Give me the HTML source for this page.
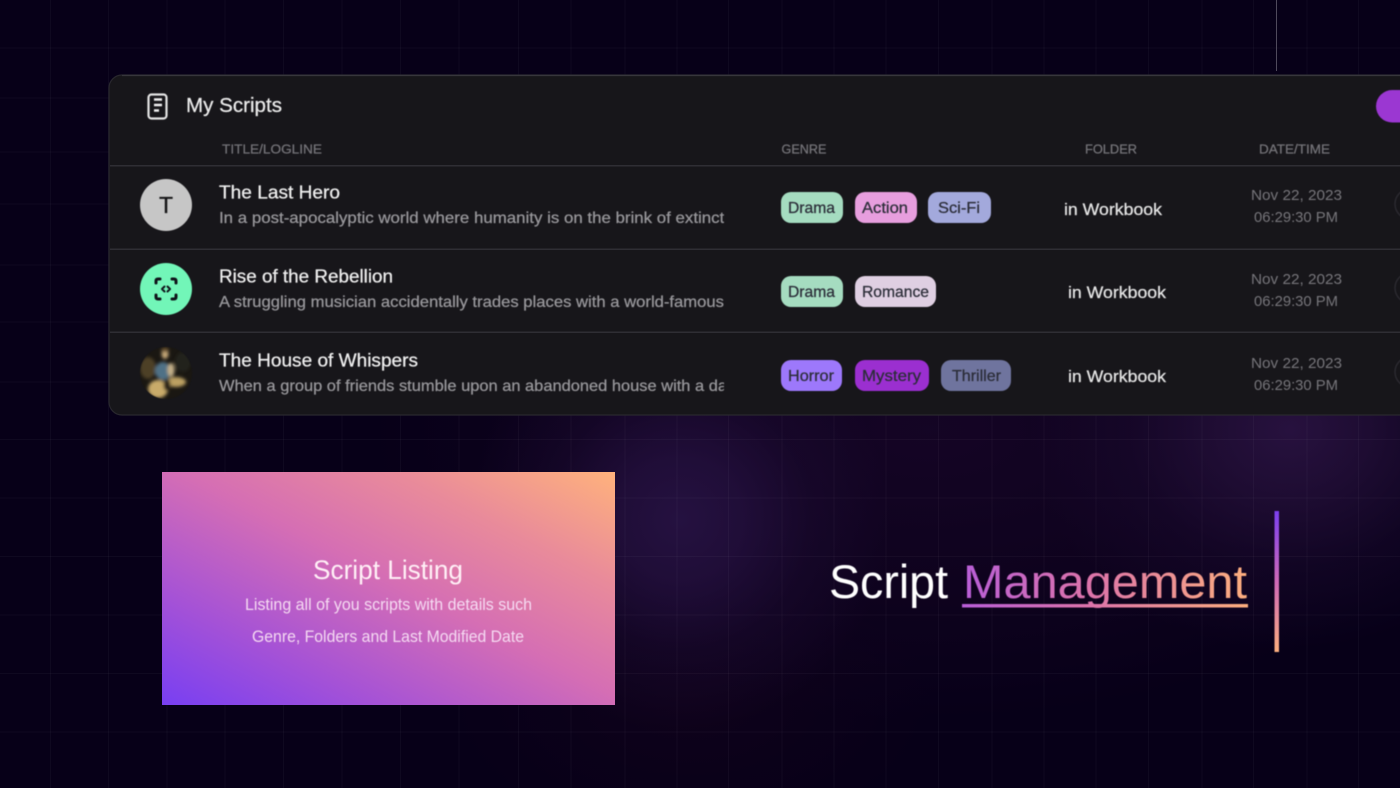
<!DOCTYPE html>
<html lang="en">
<head>
<meta charset="utf-8">
<title>Script Management</title>
<style>
html,body{margin:0;padding:0;width:1400px;height:788px;overflow:hidden;background:#070018}
.layer{position:absolute;left:0;top:0;width:1400px;height:788px}
.glow{background:
 radial-gradient(ellipse 210px 210px at 680px 520px,rgba(38,18,66,.95) 0%,rgba(36,16,62,.8) 30%,rgba(30,12,52,.42) 62%,rgba(7,0,24,0) 100%),
 radial-gradient(ellipse 260px 220px at 1290px 430px,rgba(42,19,66,.9) 0%,rgba(38,17,60,.7) 30%,rgba(30,12,52,.36) 62%,rgba(7,0,24,0) 100%),
 radial-gradient(ellipse 560px 290px at 930px 430px,rgba(24,6,40,.8) 0%,rgba(20,4,34,.5) 60%,rgba(7,0,24,0) 100%),
 radial-gradient(ellipse 240px 140px at 690px 700px,rgba(20,3,28,.6) 0%,rgba(7,0,24,0) 100%),
 #070018}
.box{position:absolute;left:162px;top:472px;width:453px;height:233px;
 background:linear-gradient(to top right,#783ff2 0%,#a552d6 24%,#d56eb4 52%,#e98b9a 76%,#ffb27c 100%)}
svg{display:block}
text{font-family:"Liberation Sans",sans-serif}
.b{filter:blur(.45px)}
.w{stroke-width:.25px}
</style>
</head>
<body>
<div class="layer glow"></div>
<svg class="layer" width="1400" height="788" viewBox="0 0 1400 788" style="position:absolute">
 <g stroke="#ffffff" stroke-opacity=".036" stroke-width="1" fill="none">
  <path d="M50.5 0V788M108.5 0V788M167 0V788M225 0V788M283.5 0V788M342 0V788M400.5 0V788M459 0V788M518.5 0V788M571 0V788M625 0V788M677 0V788M728.5 0V788M782 0V788M834 0V788M886 0V788M938.5 0V788M992 0V788M1044 0V788M1096 0V788M1148.5 0V788M1202 0V788M1253.5 0V788M1307 0V788M1358.5 0V788"/>
  <path d="M0 48H1400M0 98H110M0 152H110M0 204H110M0 265H110M0 322H110M0 382H110M0 439.5H1400M0 498H1400M0 556.5H1400M0 615H1400M0 673.5H1400M0 732H1400"/>
 </g>
</svg>
<div class="box"></div>
<svg class="layer" width="1400" height="788" viewBox="0 0 1400 788" style="position:absolute">
 <defs>
  <clipPath id="sub"><rect x="215" y="205" width="509" height="195"/></clipPath>
  <clipPath id="ava"><circle cx="166" cy="373" r="26"/></clipPath>
  <linearGradient id="mg" gradientUnits="userSpaceOnUse" x1="962" y1="0" x2="1248" y2="0">
   <stop offset="0" stop-color="#b85ed8"/><stop offset=".45" stop-color="#dd74aa"/><stop offset="1" stop-color="#fdaf7e"/>
  </linearGradient>
  <linearGradient id="vb" x1="0" y1="0" x2="0" y2="1">
   <stop offset="0" stop-color="#7c40f0"/><stop offset=".5" stop-color="#cf69b8"/><stop offset="1" stop-color="#fdaf7e"/>
  </linearGradient>
  <filter id="soft" filterUnits="userSpaceOnUse" x="130" y="335" width="72" height="76"><feGaussianBlur stdDeviation="1.500"/></filter>
 </defs>

 <!-- top connector -->
 <rect x="1276" y="0" width="1" height="71" fill="#4f4a5c"/>

 <!-- card -->
 <rect x="109" y="75" width="1320" height="340" rx="13" fill="#17161a" stroke="#29282e" stroke-width="1.2"/>
 <path d="M122 75.500H1400" stroke="#37363c" stroke-width="1.2"/>
 <g fill="#2f2e34">
  <rect x="110" y="165" width="1290" height="1.5"/>
  <rect x="110" y="248.5" width="1290" height="1.5"/>
  <rect x="110" y="331.5" width="1290" height="1.5"/>
 </g>

 <g class="b">
  <!-- header -->
  <rect x="148.500" y="94.500" width="18" height="24" rx="3" fill="none" stroke="#e4e4e4" stroke-width="2.200"/>
  <path d="M154 99.500H162M154 105H162M154 110.500H159" fill="none" stroke="#f0f0f0" stroke-width="2.400"/>
  <text class="w" stroke="#ececec" x="186" y="112" font-size="20.5" fill="#ececec" textLength="96" lengthAdjust="spacingAndGlyphs">My Scripts</text>
  <rect x="1376" y="90" width="60" height="32.5" rx="16.2" fill="#9b37d2"/>

  <!-- column heads -->
  <g class="w" stroke="#757479" font-size="12.5" fill="#757479">
   <text x="222" y="153.500" textLength="100" lengthAdjust="spacingAndGlyphs">TITLE/LOGLINE</text>
   <text x="781.500" y="153.500" textLength="45" lengthAdjust="spacingAndGlyphs">GENRE</text>
   <text x="1085" y="153.500" textLength="52" lengthAdjust="spacingAndGlyphs">FOLDER</text>
   <text x="1259" y="153.500" textLength="71" lengthAdjust="spacingAndGlyphs">DATE/TIME</text>
  </g>

  <!-- avatars -->
  <circle cx="166" cy="205" r="26" fill="#c6c6c6"/>
  <text class="w" stroke="#141416" x="166" y="213" font-size="23" fill="#141416" text-anchor="middle">T</text>
  <circle cx="166" cy="289" r="26" fill="#72f6b8"/>
  <path d="M156 283V281Q156 279 158 279H160M172 279H174Q176 279 176 281V283M176 295V297Q176 299 174 299H172M160 299H158Q156 299 156 297V295" fill="none" stroke="#10131a" stroke-width="3" stroke-linecap="round"/>
  <path d="M164.500 286.500L162 289L164.500 291.500M167.500 286.500L170 289L167.500 291.500" fill="none" stroke="#10131a" stroke-width="2" stroke-linecap="round" stroke-linejoin="round"/>
  <g clip-path="url(#ava)">
   <rect x="138" y="345" width="56" height="56" fill="#1a1712"/>
   <g filter="url(#soft)">
    <ellipse cx="148" cy="368" rx="8" ry="11" fill="#4e3f26"/>
    <ellipse cx="183" cy="362" rx="8" ry="10" fill="#22221a"/>
    <ellipse cx="165" cy="354" rx="3.500" ry="5" fill="#c6a878"/>
    <ellipse cx="165" cy="349.500" rx="4" ry="2.500" fill="#5a4526"/>
    <ellipse cx="163" cy="371" rx="8" ry="9" fill="#4f7186"/>
    <ellipse cx="171" cy="370" rx="3.500" ry="7" fill="#c4b088"/>
    <ellipse cx="158" cy="389" rx="10" ry="9" fill="#c9ab6a"/>
    <ellipse cx="176" cy="382" rx="10" ry="5" fill="#bca062"/>
    <ellipse cx="167" cy="385" rx="3.500" ry="6" fill="#231e14"/>
   </g>
  </g>

  <!-- titles -->
  <g class="w" stroke="#f0f0f0" font-size="18" fill="#f0f0f0">
   <text x="219" y="198.500" textLength="121" lengthAdjust="spacingAndGlyphs">The Last Hero</text>
   <text x="219" y="282.500" textLength="174" lengthAdjust="spacingAndGlyphs">Rise of the Rebellion</text>
   <text x="219" y="366.500" textLength="199" lengthAdjust="spacingAndGlyphs">The House of Whispers</text>
  </g>
  <g class="w" stroke="#99989c" font-size="16" fill="#99989c" clip-path="url(#sub)">
   <text x="219" y="223" textLength="509" lengthAdjust="spacingAndGlyphs">In a post-apocalyptic world where humanity is on the brink of extincti</text>
   <text x="219" y="307" textLength="505" lengthAdjust="spacingAndGlyphs">A struggling musician accidentally trades places with a world-famous</text>
   <text x="219" y="391" textLength="508" lengthAdjust="spacingAndGlyphs">When a group of friends stumble upon an abandoned house with a da</text>
  </g>

  <!-- pills -->
  <rect x="781" y="192" width="62" height="31" rx="10" fill="#a5dcc0"/>
  <rect x="855" y="192" width="62" height="31" rx="10" fill="#e79ede"/>
  <rect x="928" y="192" width="63" height="31" rx="10" fill="#a3a9dc"/>
  <rect x="781" y="276" width="62" height="31" rx="10" fill="#a5dcc0"/>
  <rect x="855" y="276" width="81" height="31" rx="10" fill="#dfcfe2"/>
  <rect x="781" y="360" width="61" height="31" rx="10" fill="#9d78fb"/>
  <rect x="855" y="360" width="74" height="31" rx="10" fill="#9b2fd0"/>
  <rect x="941" y="360" width="70" height="31" rx="10" fill="#6f749e"/>
  <g class="w" stroke="#2b2d38" font-size="16" fill="#2b2d38">
   <text x="788" y="213" textLength="47" lengthAdjust="spacingAndGlyphs">Drama</text>
   <text x="862" y="213" textLength="46" lengthAdjust="spacingAndGlyphs">Action</text>
   <text x="938" y="213" textLength="42" lengthAdjust="spacingAndGlyphs">Sci-Fi</text>
   <text x="788" y="297" textLength="47" lengthAdjust="spacingAndGlyphs">Drama</text>
   <text x="862" y="297" textLength="67" lengthAdjust="spacingAndGlyphs">Romance</text>
   <text x="788" y="381" textLength="46" lengthAdjust="spacingAndGlyphs">Horror</text>
   <text x="862" y="381" textLength="59" lengthAdjust="spacingAndGlyphs">Mystery</text>
   <text x="952" y="381" textLength="49" lengthAdjust="spacingAndGlyphs">Thriller</text>
  </g>

  <!-- folder -->
  <g class="w" stroke="#e6e6e6" font-size="17" fill="#e6e6e6">
   <text x="1064" y="215" textLength="98" lengthAdjust="spacingAndGlyphs">in Workbook</text>
   <text x="1068" y="298" textLength="98" lengthAdjust="spacingAndGlyphs">in Workbook</text>
   <text x="1068" y="382" textLength="98" lengthAdjust="spacingAndGlyphs">in Workbook</text>
  </g>

  <!-- dates -->
  <g font-size="15" fill="#77767b">
   <text x="1251" y="200" textLength="91" lengthAdjust="spacingAndGlyphs">Nov 22, 2023</text>
   <text x="1254" y="222" textLength="84" lengthAdjust="spacingAndGlyphs">06:29:30 PM</text>
   <text x="1251" y="284" textLength="91" lengthAdjust="spacingAndGlyphs">Nov 22, 2023</text>
   <text x="1254" y="306" textLength="84" lengthAdjust="spacingAndGlyphs">06:29:30 PM</text>
   <text x="1251" y="368" textLength="91" lengthAdjust="spacingAndGlyphs">Nov 22, 2023</text>
   <text x="1254" y="390" textLength="84" lengthAdjust="spacingAndGlyphs">06:29:30 PM</text>
  </g>

  <!-- row actions -->
  <g fill="none" stroke="#2b2a30" stroke-width="1.500">
   <circle cx="1410" cy="204" r="15"/>
   <circle cx="1410" cy="288" r="15"/>
   <circle cx="1410" cy="372" r="15"/>
  </g>

  <!-- gradient box text -->
  <text x="313" y="579" font-size="27" fill="#fff0f6" textLength="150" lengthAdjust="spacingAndGlyphs">Script Listing</text>
  <text x="245" y="610" font-size="16.5" fill="#f5daf2" textLength="287" lengthAdjust="spacingAndGlyphs">Listing all of you scripts with details such</text>
  <text x="252" y="642" font-size="16.5" fill="#f5daf2" textLength="272" lengthAdjust="spacingAndGlyphs">Genre, Folders and Last Modified Date</text>

  <!-- heading -->
  <text x="829" y="598" font-size="47" fill="#ffffff" textLength="119" lengthAdjust="spacingAndGlyphs">Script</text>
  <text x="963" y="598" font-size="47" fill="url(#mg)" textLength="284" lengthAdjust="spacingAndGlyphs">Management</text>
  <rect x="962" y="604" width="286" height="3.500" fill="url(#mg)"/>
  <rect x="1274.500" y="511" width="4.500" height="141" fill="url(#vb)"/>
 </g>
</svg>
</body>
</html>
